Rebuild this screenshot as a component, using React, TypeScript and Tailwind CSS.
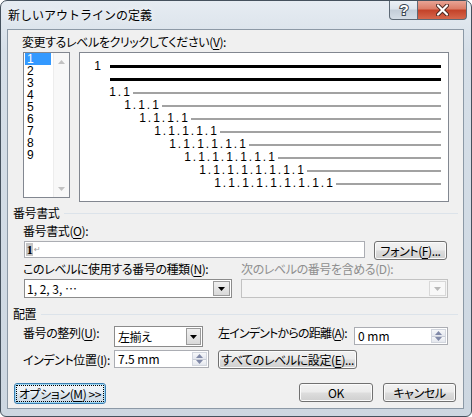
import React from 'react';

// mnemonic letter, underlined
const Mn = ({ c }: { c: string }) => <span className="underline underline-offset-[2px]">{c}</span>;

const Down = ({ fill = '#000' }: { fill?: string }) => (
  <svg width="7" height="4" viewBox="0 0 7 4">
    <path d="M0 0h7L3.5 4z" fill={fill} />
  </svg>
);
const Up = ({ fill = '#000' }: { fill?: string }) => (
  <svg width="7" height="4" viewBox="0 0 7 4">
    <path d="M3.5 0L7 4H0z" fill={fill} />
  </svg>
);

function Btn({ children, className = '' }: { children: React.ReactNode; className?: string }) {
  return (
    <div
      className={`flex items-center justify-center rounded-[3px] border border-[#707070] bg-[linear-gradient(180deg,#f2f2f2_0%,#ebebeb_48%,#dddddd_52%,#cfcfcf_100%)] shadow-[inset_0_0_0_1px_#fbfbfb] leading-[14px] ${className}`}
    >
      {children}
    </div>
  );
}

function Spin({ value, className = '' }: { value: string; className?: string }) {
  return (
    <div className={`flex border border-[#abadb3] bg-white ${className}`}>
      <div className="flex-1 flex items-center pl-[3px] leading-[14px]">{value}</div>
      <div className="w-[15px] my-px mr-px flex flex-col border border-[#d2d6de]">
        <div className="flex-1 flex items-center justify-center bg-[linear-gradient(180deg,#f6f7f9,#e4e7ee)] border-b border-[#c9cdd7]">
          <Up fill="#8089a8" />
        </div>
        <div className="flex-1 flex items-center justify-center bg-[linear-gradient(180deg,#f6f7f9,#e4e7ee)]">
          <Down fill="#8089a8" />
        </div>
      </div>
    </div>
  );
}

function Header({ text, className = '' }: { text: string; className?: string }) {
  return (
    <div className={`flex items-center h-[14px] pl-[5px] pr-[5px] leading-[14px] ${className}`}>
      <span>{text}</span>
      <div className="ml-[5px] flex-1 h-px bg-[#dce3ea]" />
    </div>
  );
}

function Cells({ text }: { text: string }) {
  return (
    <div className="flex font-['Liberation_Sans',sans-serif] text-[12px] leading-[13px] text-black tracking-normal">
      {text.split('').map((ch, i) => (
        <span key={i} className="w-[7px] text-center text-black">
          {ch}
        </span>
      ))}
    </div>
  );
}

const levels = [
  { n: 2, pl: 'pl-[29px]' },
  { n: 3, pl: 'pl-[44px]' },
  { n: 4, pl: 'pl-[59px]' },
  { n: 5, pl: 'pl-[74px]' },
  { n: 6, pl: 'pl-[89px]' },
  { n: 7, pl: 'pl-[104px]' },
  { n: 8, pl: 'pl-[119px]' },
  { n: 9, pl: 'pl-[134px]' },
];

function Preview() {
  return (
    <div className="ml-[9px] w-[370px] h-[150px] border border-[#828790] bg-white pt-[7px] pr-[7px]">
      <div className="flex items-center h-[13px] pl-[14px]">
        <Cells text="1" />
        <div className="ml-[9px] flex-1 h-[3px] bg-black" />
      </div>
      <div className="flex items-center h-[13px] pl-[30px]">
        <div className="flex-1 h-[3px] bg-black" />
      </div>
      {levels.map((l) => (
        <div key={l.n} className={`flex items-center h-[13px] ${l.pl}`}>
          <Cells text={Array(l.n).fill('1').join('.')} />
          <div className="ml-[3px] flex-1 h-[2px] bg-[#a2a2a2]" />
        </div>
      ))}
    </div>
  );
}

function LevelList() {
  return (
    <div className="w-[47px] h-[146px] border border-[#828790] bg-white flex tracking-normal">
      <div className="flex-1 pl-[1px] pr-[2px] font-['Liberation_Sans',sans-serif] text-[12px]">
        {['1', '2', '3', '4', '5', '6', '7', '8', '9'].map((d, i) => (
          <div
            key={d}
            className={i === 0 ? 'h-[12px] leading-[12px] pl-[2px] bg-[#3399ff] text-white' : 'h-[12px] leading-[12px] pl-[2px]'}
          >
            {d}
          </div>
        ))}
      </div>
      <div className="w-[16px] bg-[#f8f8f8] border-l border-[#ededed] flex flex-col justify-between">
        <div className="h-[17px] flex items-center justify-center">
          <Up fill="#c2c2c2" />
        </div>
        <div className="h-[17px] flex items-center justify-center">
          <Down fill="#c2c2c2" />
        </div>
      </div>
    </div>
  );
}

function TitleBar() {
  return (
    <div className="h-[28px] flex items-start shrink-0">
      <div className="mt-[7px] pl-[7px] leading-[14px] text-[12px] text-black whitespace-nowrap [text-shadow:0_0_6px_#ffffff]">
        新しいアウトラインの定義
      </div>
      <div className="ml-auto mr-[4px] -mt-px flex h-[20px]">
        <div className="w-[29px] h-full flex items-center justify-center border border-t-0 border-[#5d6976] rounded-bl-[4px] bg-[linear-gradient(180deg,#eef2f6_0%,#dde4ec_45%,#c4ced9_55%,#d4dde6_100%)]">
          <svg width="12" height="16" viewBox="0 0 12 16">
            <text
              x="6"
              y="13"
              textAnchor="middle"
              fontFamily="Liberation Sans, sans-serif"
              fontWeight="bold"
              fontSize="15"
              fill="#ffffff"
              stroke="#3b4753"
              strokeWidth="2"
              paintOrder="stroke"
            >
              ?
            </text>
          </svg>
        </div>
        <div className="w-[49px] h-full flex items-center justify-center border border-l-0 border-t-0 border-[#5d6976] rounded-br-[4px] bg-[linear-gradient(180deg,#eaa99b_0%,#dc7e69_45%,#c4432a_55%,#d6674c_100%)]">
          <svg width="13" height="12" viewBox="0 0 13 12">
            <path d="M2 1.5l9 9M11 1.5l-9 9" stroke="#4a2620" strokeWidth="4" strokeLinecap="round" />
            <path d="M2 1.5l9 9M11 1.5l-9 9" stroke="#ffffff" strokeWidth="2.2" strokeLinecap="round" />
          </svg>
        </div>
      </div>
    </div>
  );
}

function Client() {
  return (
    <div className="w-[457px] h-[380px] border border-[#8c99a6] bg-[#f0f0f0] whitespace-nowrap tracking-[-0.4px] [font-feature-settings:'palt']">
      <div className="pl-[14px] pt-[5px] leading-[14px]">
        変更するレベルをクリックしてください(<Mn c="V" />):
      </div>
      <div className="mt-[3px] ml-[15px] flex items-start">
        <LevelList />
        <Preview />
      </div>

      <Header text="番号書式" className="mt-[4px]" />
      <div className="mt-[4px] pl-[15px] leading-[14px]">
        番号書式(<Mn c="O" />):
      </div>
      <div className="mt-[3px] ml-[16px] flex items-start">
        <div className="w-[341px] h-[17px] border border-[#abadb3] bg-white flex items-stretch py-px">
          <span className="ml-px w-[7px] bg-[#c6c6c6] flex items-center justify-center font-['Liberation_Serif',serif] font-bold text-[12px] leading-none">
            1
          </span>
          <span className="ml-px flex items-center font-['DejaVu_Sans',sans-serif] text-[8px] text-[#a0a0a0]">↵</span>
        </div>
        <Btn className="ml-[9px] w-[73px] h-[19px]">
          フォント(<Mn c="F" />)...
        </Btn>
      </div>
      <div className="mt-[2px] ml-[15px] flex leading-[14px]">
        <div className="w-[218px]">
          このレベルに使用する番号の種類(<Mn c="N" />):
        </div>
        <div className="text-[#8e8e8e]">次のレベルの番号を含める(D):</div>
      </div>
      <div className="mt-[3px] ml-[16px] flex">
        <div className="w-[208px] h-[19px] border border-[#8b8b8b] bg-white flex">
          <div className="flex-1 flex items-center pl-[2px] leading-[14px] tracking-normal">1, 2, 3, …</div>
          <div className="w-[17px] m-px border border-[#9a9a9a] bg-[linear-gradient(180deg,#f0f0f0,#d9d9d9)] flex items-center justify-center">
            <Down />
          </div>
        </div>
        <div className="ml-[9px] w-[207px] h-[19px] border border-[#c2c2c2] bg-[#f4f4f4] flex">
          <div className="flex-1" />
          <div className="w-[17px] m-px border border-[#d8d8d8] bg-[#f8f8f8] flex items-center justify-center">
            <Down fill="#b8b8b8" />
          </div>
        </div>
      </div>

      <Header text="配置" className="mt-[9px]" />
      <div className="mt-[5px] ml-[15px] flex items-start leading-[14px]">
        <div className="w-[91px]">
          番号の整列(<Mn c="U" />):
        </div>
        <div className="w-[89px] h-[21px] border border-[#8b8b8b] bg-white flex">
          <div className="flex-1 flex items-end pb-[2px] pl-[3px]">左揃え</div>
          <div className="w-[15px] m-px border border-[#9a9a9a] bg-[linear-gradient(180deg,#f0f0f0,#d9d9d9)] flex items-center justify-center">
            <Down />
          </div>
        </div>
        <div className="ml-[15px] w-[136px] tracking-[-0.8px]">
          左インデントからの距離(<Mn c="A" />):
        </div>
        <Spin value="0 mm" className="mt-px w-[94px] h-[18px] tracking-normal" />
      </div>
      <div className="mt-[3px] ml-[15px] flex items-start leading-[14px]">
        <div className="w-[91px] pt-[3px]">
          インデント位置(<Mn c="I" />):
        </div>
        <Spin value="7.5 mm" className="w-[95px] h-[18px] tracking-normal" />
        <Btn className="ml-[9px] w-[139px] h-[19px]">
          すべてのレベルに設定(<Mn c="E" />)...
        </Btn>
      </div>

      <div className="mt-[14px] ml-[6px] flex items-start">
        <div className="w-[92px] h-[21px] rounded-[3px] border border-[#3c7fb1] bg-[linear-gradient(180deg,#f1f6fa_0%,#e8eff5_48%,#d8e3ec_52%,#cfdce8_100%)] shadow-[inset_0_0_0_1px_#9fd8f5] p-[2px] flex">
          <div className="flex-1 flex items-center justify-center outline outline-1 outline-dotted outline-black leading-[14px]">
            オプション(<Mn c="M" />) &gt;&gt;
          </div>
        </div>
        <Btn className="ml-[193px] w-[74px] h-[19px]">OK</Btn>
        <Btn className="ml-[10px] w-[73px] h-[19px]">キャンセル</Btn>
      </div>
    </div>
  );
}

export default function App() {
  return (
    <div className="w-[472px] h-[417px] bg-white">
      <div className="w-[472px] h-[417px] flex flex-col border border-[#45515d] rounded-t-[7px] rounded-b-[6px] overflow-hidden bg-[linear-gradient(180deg,#e6ecf2_0%,#d6dfe8_12%,#cdd7e1_100%)] font-['Noto_Sans_CJK_JP','Noto_Sans',sans-serif] text-[12px] text-black">
        <TitleBar />
        <div className="pl-[6px] pr-[7px]">
          <Client />
        </div>
      </div>
    </div>
  );
}
